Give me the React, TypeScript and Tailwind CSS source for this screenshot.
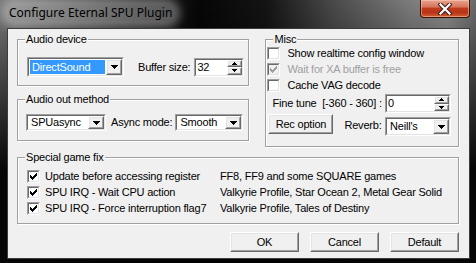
import type { ReactNode } from "react";

const sunkenOuter = "border border-t-[#a0a0a0] border-l-[#a0a0a0] border-r-white border-b-white";
const sunkenInner = "border border-t-[#696969] border-l-[#696969] border-r-[#e3e3e3] border-b-[#e3e3e3]";
const raisedOuter = "border border-t-white border-l-white border-r-[#696969] border-b-[#696969]";
const raisedInner = "border border-t-[#e3e3e3] border-l-[#e3e3e3] border-r-[#a0a0a0] border-b-[#a0a0a0]";

function CheckMark({ color }: { color: string }) {
  return (
    <svg width="7" height="7" viewBox="0 0 7 7" shapeRendering="crispEdges">
      <g fill={color}>
        <rect x="6" y="0" width="1" height="1" />
        <rect x="5" y="1" width="2" height="1" />
        <rect x="0" y="2" width="1" height="1" />
        <rect x="4" y="2" width="3" height="1" />
        <rect x="0" y="3" width="2" height="1" />
        <rect x="3" y="3" width="3" height="1" />
        <rect x="0" y="4" width="5" height="1" />
        <rect x="1" y="5" width="3" height="1" />
        <rect x="2" y="6" width="1" height="1" />
      </g>
    </svg>
  );
}

function Checkbox({ checked, disabled }: { checked?: boolean; disabled?: boolean }) {
  return (
    <div className={`w-[13px] h-[13px] shrink-0 ${sunkenOuter}`}>
      <div className={`w-full h-full flex items-center justify-center ${sunkenInner} ${disabled ? "bg-[#f0f0f0]" : "bg-white"}`}>
        {checked && <CheckMark color={disabled ? "#a0a0a0" : "#000"} />}
      </div>
    </div>
  );
}

function CheckRow({ label, checked, disabled, gap, textWidth, note }: { label: string; checked?: boolean; disabled?: boolean; gap: string; textWidth?: string; note?: string }) {
  return (
    <div className="flex items-start h-[16px]">
      <Checkbox checked={checked} disabled={disabled} />
      <span className={`${gap} ${textWidth ?? ""} whitespace-nowrap ${disabled ? "text-[#a0a0a0]" : ""}`}>{label}</span>
      {note && <span className="whitespace-nowrap">{note}</span>}
    </div>
  );
}

function Arrow({ w, h }: { w: number; h: number }) {
  return (
    <svg width={w} height={h} viewBox={`0 0 ${w} ${h}`} shapeRendering="crispEdges">
      <path d={`M0 0H${w}L${w / 2} ${h}Z`} fill="#000" />
    </svg>
  );
}

function DropButton() {
  return (
    <div className={`w-[16px] h-full shrink-0 ${raisedOuter}`}>
      <div className={`w-full h-full flex items-center justify-center bg-[#f0f0f0] ${raisedInner}`}>
        <Arrow w={7} h={4} />
      </div>
    </div>
  );
}

function Combo({ value, className, focused }: { value: string; className: string; focused?: boolean }) {
  return (
    <div className={`shrink-0 ${sunkenOuter} ${className}`}>
      <div className={`w-full h-full flex bg-white ${sunkenInner}`}>
        <div className="flex-1 p-[1px] flex">
          <span className={`flex-1 flex items-center pl-[2px] whitespace-nowrap ${focused ? "bg-[#3399ff] text-white" : ""}`}>{value}</span>
        </div>
        <DropButton />
      </div>
    </div>
  );
}

function SpinArrow({ up }: { up?: boolean }) {
  return (
    <div className={`flex-1 ${raisedOuter}`}>
      <div className={`w-full h-full flex items-center justify-center bg-[#f0f0f0] ${raisedInner}`}>
        <svg width="5" height="3" viewBox="0 0 5 3" shapeRendering="crispEdges">
          <path d={up ? "M2.5 0L5 3H0Z" : "M0 0H5L2.5 3Z"} fill="#000" />
        </svg>
      </div>
    </div>
  );
}

function Spin({ value, className }: { value: string; className: string }) {
  return (
    <div className={`shrink-0 ${sunkenOuter} ${className}`}>
      <div className={`w-full h-full flex bg-white ${sunkenInner}`}>
        <span className="flex-1 pl-[1px] flex items-center">{value}</span>
        <div className="w-[15px] flex flex-col">
          <SpinArrow up />
          <SpinArrow />
        </div>
      </div>
    </div>
  );
}

function Button({ children, className }: { children: ReactNode; className: string }) {
  return (
    <div className={`shrink-0 ${raisedOuter} ${className}`}>
      <div className={`w-full h-full flex items-center justify-center bg-[#f0f0f0] ${raisedInner}`}>{children}</div>
    </div>
  );
}

function Group({ title, className, children }: { title: string; className: string; children: ReactNode }) {
  return (
    <div className={`flex flex-col border border-[#a0a0a0] shadow-[inset_1px_1px_0_#fff,1px_1px_0_#fff] ${className}`}>
      <span className="-mt-[7px] ml-[7px] px-[1px] self-start bg-[#f0f0f0]">{title}</span>
      {children}
    </div>
  );
}

function CloseButton() {
  return (
    <div className="ml-auto mr-[6px] w-[50px] h-[18px] rounded-b-[4px] border border-t-0 border-[#3b1208] bg-[linear-gradient(180deg,#e9a48f_0%,#d8755c_40%,#c03a1c_50%,#b8341a_75%,#d2632f_100%)] shadow-[inset_0_0_0_1px_rgba(255,220,200,0.45)] flex items-center justify-center">
      <svg width="14" height="12" viewBox="0 0 14 12">
        <path d="M2.5 1.5L11.5 10.5M11.5 1.5L2.5 10.5" stroke="#3a1a14" strokeWidth="4.2" strokeLinecap="square" />
        <path d="M2.5 1.5L11.5 10.5M11.5 1.5L2.5 10.5" stroke="#fff" strokeWidth="2.2" strokeLinecap="square" />
      </svg>
    </div>
  );
}

export default function App() {
  return (
    <div className="w-[476px] h-[263px] overflow-hidden flex flex-col font-['Liberation_Sans',Arial,sans-serif] text-[11px] leading-[13px] text-black bg-[linear-gradient(180deg,rgba(0,0,0,0)_0px,rgba(0,0,0,0.35)_60px,rgba(0,0,0,0.95)_170px),linear-gradient(90deg,#7a7a7a_0%,#5e5e5e_10%,#262626_28%,#060606_42%,#141414_56%,#4a4a4a_70%,#7c7c7c_86%,#8c8c8c_94%,#6a6a6a_100%)]">
      <div className="h-[28px] shrink-0 flex items-start">
        <span className="ml-[8px] mt-[5px] px-[1px] font-['Noto_Sans',sans-serif] text-[12px] leading-[16px] rounded-[10px] bg-white/30 shadow-[0_0_10px_7px_rgba(255,255,255,0.35)]">
          Configure Eternal SPU Plugin
        </span>
        <CloseButton />
      </div>

      <div className="ml-[7px] mr-[6px] h-[231px] shrink-0 border border-[#3c3c3c] bg-[#f0f0f0] flex flex-col pt-[10px] pl-[9px] pr-[10px] tracking-[-0.2px]">
        <div className="flex items-start gap-[16px]">
          <div className="w-[233px] flex flex-col gap-[13px]">
            <Group title="Audio device" className="h-[47px]">
              <div className="flex items-center mt-[11px] ml-[9px]">
                <Combo className="w-[97px] h-[20px]" value="DirectSound" focused />
                <span className="ml-[14px] whitespace-nowrap">Buffer size:</span>
                <Spin className="ml-auto mr-[4px] w-[50px] h-[19px]" value="32" />
              </div>
            </Group>
            <Group title="Audio out method" className="h-[42px]">
              <div className="flex items-center mt-[8px] ml-[8px]">
                <Combo className="w-[80px] h-[17px]" value="SPUasync" />
                <span className="ml-[5px] whitespace-nowrap">Async mode:</span>
                <Combo className="ml-auto mr-[5px] w-[68px] h-[17px]" value="Smooth" />
              </div>
            </Group>
          </div>

          <Group title="Misc" className="w-[194px] h-[108px]">
            <div className="flex flex-col ml-[1px] mt-[1px]">
              <CheckRow gap="ml-[7px]" label="Show realtime config window" />
              <CheckRow gap="ml-[7px]" label="Wait for XA buffer is free" checked disabled />
              <CheckRow gap="ml-[7px]" label="Cache VAG decode" />
            </div>
            <div className="flex items-center -mt-[1px] ml-[6px]">
              <span className="whitespace-pre">Fine tune  [-360 - 360] :</span>
              <Spin className="ml-auto mr-[7px] w-[66px] h-[19px]" value="0" />
            </div>
            <div className="flex items-start mt-[1px] ml-[2px]">
              <Button className="w-[65px] h-[20px]">Rec option</Button>
              <span className="ml-[11px] mt-[5px]">Reverb:</span>
              <Combo className="ml-auto mr-[7px] mt-[3px] w-[66px] h-[19px]" value="Neill's" />
            </div>
          </Group>
        </div>

        <Group title="Special game fix" className="mt-[10px] h-[67px]">
          <div className="flex flex-col ml-[9px] mt-[6px]">
            <CheckRow gap="ml-[5px]" textWidth="w-[175px]" label="Update before accessing register" note="FF8, FF9 and some SQUARE games" checked />
            <CheckRow gap="ml-[5px]" textWidth="w-[175px]" label="SPU IRQ - Wait CPU action" note="Valkyrie Profile, Star Ocean 2, Metal Gear Solid" checked />
            <CheckRow gap="ml-[5px]" textWidth="w-[175px]" label="SPU IRQ - Force interruption flag7" note="Valkyrie Profile, Tales of Destiny" checked />
          </div>
        </Group>

        <div className="flex justify-end gap-[11px] mt-[8px]">
          <Button className="w-[69px] h-[20px]">OK</Button>
          <Button className="w-[69px] h-[20px]">Cancel</Button>
          <Button className="w-[69px] h-[20px]">Default</Button>
        </div>
      </div>
    </div>
  );
}
